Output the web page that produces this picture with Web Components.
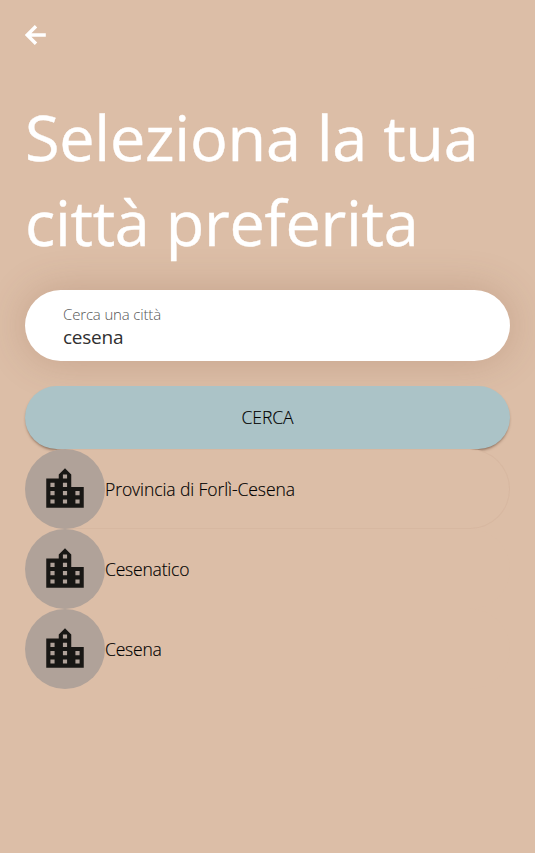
<!DOCTYPE html>
<html lang="it"><head><meta charset="utf-8"><title>Città preferita</title>
<style>html,body{margin:0;height:100%;background:#dcbea7}</style></head>
<body><city-page></city-page>
<script>
const define=(name,html)=>customElements.define(name,class extends HTMLElement{
  constructor(){super();this.attachShadow({mode:'open'}).innerHTML=html;}
});
define('back-button',`<style>:host{display:block;width:21px;height:20px}svg{display:block}</style>
<svg width="21" height="20" viewBox="0 0 21 20" fill="none" stroke="#fff" stroke-width="3.4"><path d="M20.8 10H2.5M11 1.2 2.2 10 11 18.8"/></svg>`);
define('page-title',`<style>:host{display:block;font:400 63px/85px "Open Sans",sans-serif;color:#fff;white-space:nowrap;letter-spacing:-.28px;-webkit-text-stroke:.4px #fff}
.a,.b{display:block}</style>
<span class="a"><slot name="first"></slot></span><span class="b"><slot name="second"></slot></span>`);
define('search-field',`<style>:host{display:flex;flex-direction:column;box-sizing:border-box;height:71px;padding:14px 38px 0;border-radius:36px;background:#fff;box-shadow:0 0 40px rgba(120,70,50,.24)}
.l{font:350 15px/21px "Open Sans",sans-serif;color:#555;letter-spacing:-.16px}.v{font:380 19px/24px "Open Sans",sans-serif;color:#303030;letter-spacing:-.25px}</style>
<span class="l"><slot name="label"></slot></span><span class="v"><slot></slot></span>`);
define('search-button',`<style>:host{display:flex;align-items:center;justify-content:center;box-sizing:border-box;height:62.5px;border-radius:32px;background:#abc3c7;font:350 17.5px/24px "Open Sans",sans-serif;color:#000;letter-spacing:-.1px;-webkit-text-stroke:.15px #000;box-shadow:0 2px 3px -1px rgba(70,40,25,.6)}</style><slot></slot>`);
define('city-row',`<style>:host{display:flex;align-items:center;height:80px;border-radius:40px;background:#dcbea7;font:350 17.5px/24px "Open Sans",sans-serif;color:#000;position:relative;letter-spacing:-.2px;-webkit-text-stroke:.15px #000}
:host([active]){letter-spacing:-.08px;box-shadow:inset 0 0 0 1px rgba(130,80,50,.05)}
i{display:flex;width:80px;height:80px;border-radius:50%;background:#b0a299;align-items:center;justify-content:center}</style>
<i><svg width="50" height="50" viewBox="0 0 24 24" fill="#181714"><path d="M15 11V5l-3-3-3 3v2H3v14h18V11h-6zm-8 8H5v-2h2v2zm0-4H5v-2h2v2zm0-4H5V9h2v2zm6 8h-2v-2h2v2zm0-4h-2v-2h2v2zm0-4h-2V9h2v2zm0-4h-2V5h2v2zm6 12h-2v-2h2v2zm0-4h-2v-2h2v2z"/></svg></i><span><slot></slot></span>`);
define('city-page',`<style>:host{display:block;box-sizing:border-box;min-height:853px;padding:25px;overflow:hidden;background:#dcbea7}
page-title{margin-top:49px}search-field{margin-top:26px}search-button{margin:25px 0 .5px}</style>
<back-button></back-button>
<page-title><span slot="first">Seleziona la tua</span><span slot="second">città preferita</span></page-title>
<search-field><span slot="label">Cerca una città</span>cesena</search-field>
<search-button>CERCA</search-button>
<city-row active>Provincia di Forlì-Cesena</city-row><city-row>Cesenatico</city-row><city-row>Cesena</city-row>`);
</script></body></html>
